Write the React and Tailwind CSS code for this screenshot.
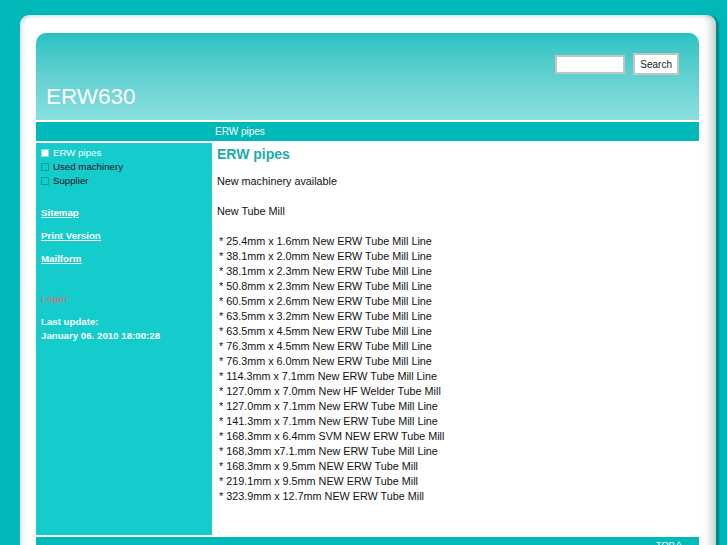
import React from 'react';

const mills = [
  '* 25.4mm x 1.6mm New ERW Tube Mill Line',
  '* 38.1mm x 2.0mm New ERW Tube Mill Line',
  '* 38.1mm x 2.3mm New ERW Tube Mill Line',
  '* 50.8mm x 2.3mm New ERW Tube Mill Line',
  '* 60.5mm x 2.6mm New ERW Tube Mill Line',
  '* 63.5mm x 3.2mm New ERW Tube Mill Line',
  '* 63.5mm x 4.5mm New ERW Tube Mill Line',
  '* 76.3mm x 4.5mm New ERW Tube Mill Line',
  '* 76.3mm x 6.0mm New ERW Tube Mill Line',
  '* 114.3mm x 7.1mm New ERW Tube Mill Line',
  '* 127.0mm x 7.0mm New HF Welder Tube Mill',
  '* 127.0mm x 7.1mm New ERW Tube Mill Line',
  '* 141.3mm x 7.1mm New ERW Tube Mill Line',
  '* 168.3mm x 6.4mm SVM NEW ERW Tube Mill',
  '* 168.3mm x7.1.mm New ERW Tube Mill Line',
  '* 168.3mm x 9.5mm NEW ERW Tube Mill',
  '* 219.1mm x 9.5mm NEW ERW Tube Mill',
  '* 323.9mm x 12.7mm NEW ERW Tube Mill',
];

const menu = [
  { label: 'ERW pipes', active: true },
  { label: 'Used machinery' },
  { label: 'Supplier' },
];

export default function App() {
  return (
    <div className="h-[545px] overflow-hidden bg-[#00b8b8] pt-[15px] pl-[20px] font-['Liberation_Sans',Arial,sans-serif]">
      <div className="w-[696px] h-[560px] rounded-[9px] bg-white pt-[18px] pl-[16px] pr-[17px] shadow-[inset_4px_3px_4px_-2px_rgba(0,90,90,0.18),inset_-10px_0_8px_-6px_rgba(0,60,60,0.28),3px_1px_2px_rgba(0,70,70,0.45)]">
        {/* Header */}
        <div className="h-[87px] rounded-t-[10px] bg-gradient-to-b from-[#24c2c2] to-[#8adfdf] flex flex-col justify-between">
          <div className="flex justify-end items-center gap-[8px] pt-[20px] pr-[20px]">
            <input className="w-[70px] h-[19px] bg-white border-2 border-[#c4c4c4] outline-none" />
            <button className="h-[22px] px-[5px] bg-white border-2 border-[#c4c4c4] text-[10px] text-[#222]">Search</button>
          </div>
          <div className="pl-[10px] pb-[12px] text-[22.5px] leading-none text-white">ERW630</div>
        </div>
        <div className="h-[2px]" />
        {/* Nav bar */}
        <div className="h-[19px] bg-[#00b9b9] flex items-center pl-[179px] text-[10px] text-white">ERW pipes</div>
        <div className="h-[2px]" />
        {/* Body */}
        <div className="flex h-[392px]">
          <div className="w-[176px] bg-[#14cccc] pl-[5px] pt-[3px] text-[9.7px]">
            <ul className="flex flex-col">
              {menu.map((m) => (
                <li key={m.label} className="flex items-center gap-[4px] h-[14px]">
                  <span className={`w-[8px] h-[8px] border ${m.active ? 'bg-white border-[#9adede]' : 'bg-[#14cccc] border-[#0a9f9f]'}`} />
                  <span className={m.active ? 'text-white' : 'text-[#111]'}>{m.label}</span>
                </li>
              ))}
            </ul>
            <div className="mt-[19px] flex flex-col gap-[11px] font-bold text-white underline">
              <a className="leading-[12px]">Sitemap</a>
              <a className="leading-[12px]">Print Version</a>
              <a className="leading-[12px]">Mailform</a>
            </div>
            <div className="mt-[28px] font-bold text-[#b98282] leading-[12px]">Login</div>
            <div className="mt-[10px] font-bold text-white leading-[14px]">
              <div>Last update:</div>
              <div>January 06. 2010 18:00:28</div>
            </div>
          </div>
          <div className="flex-1 bg-white pl-[5px] pt-[3px] text-[10.8px] text-[#111]">
            <h1 className="text-[14px] font-bold text-[#18adad] leading-[16px]">ERW pipes</h1>
            <p className="mt-[12px] leading-[15px]">New machinery available</p>
            <p className="mt-[15px] leading-[15px]">New Tube Mill</p>
            <ul className="mt-[15px] pl-[2px]">
              {mills.map((m) => (
                <li key={m} className="leading-[15px]">{m}</li>
              ))}
            </ul>
          </div>
        </div>
        <div className="h-[2px]" />
        <div className="h-[20px] bg-[#00b9b9] flex justify-end pr-[18px] pt-[2px] text-[9px] text-white">TOP ^</div>
      </div>
    </div>
  );
}
